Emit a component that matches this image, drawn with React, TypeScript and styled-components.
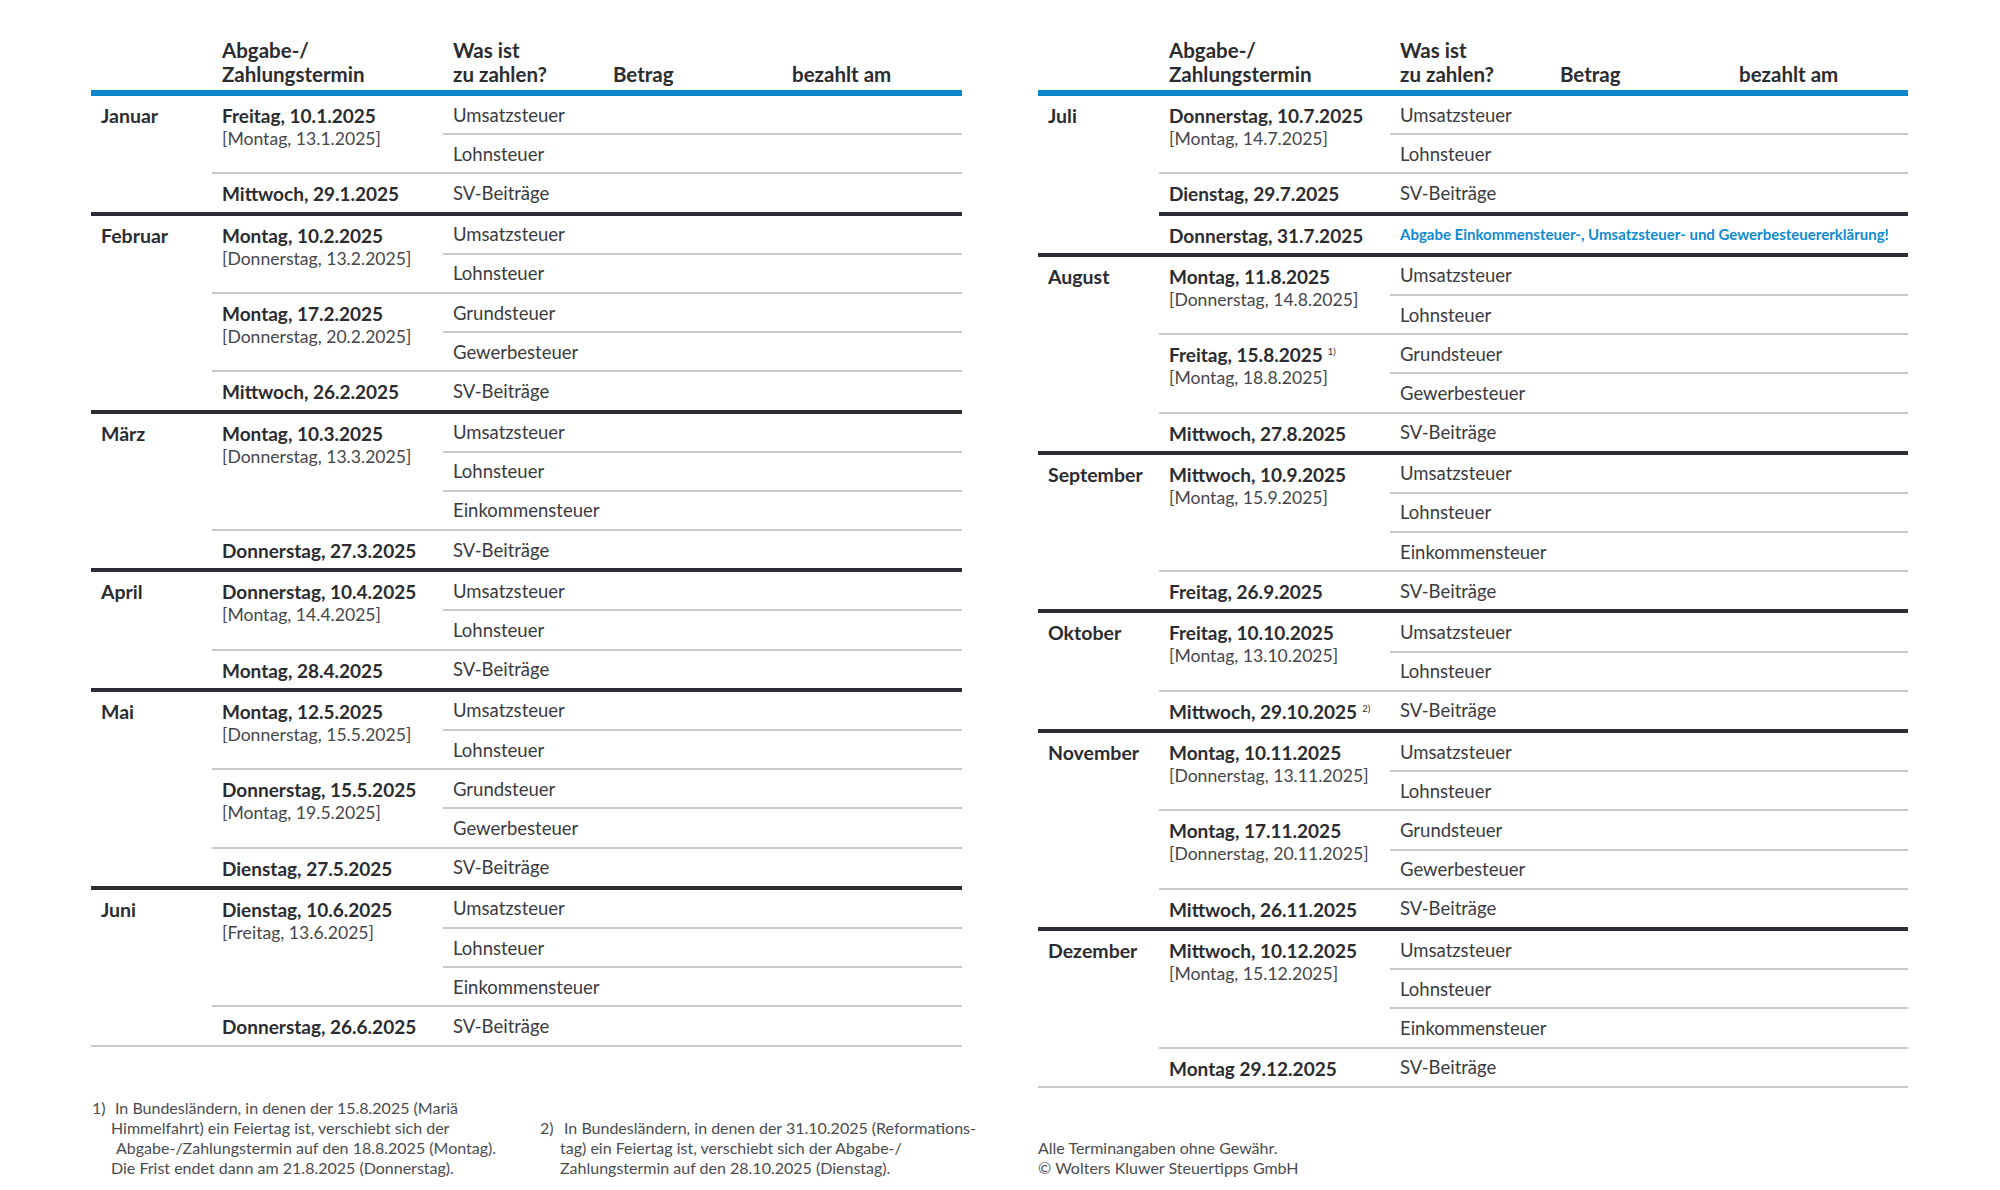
import React from "react";
import styled, { createGlobalStyle } from "styled-components";

const GlobalStyle = createGlobalStyle`
  html, body { margin: 0; padding: 0; background: #ffffff; }
  body { font-family: Lato, "Open Sans", "Liberation Sans", sans-serif; color: #2f3033; }
`;

const BLUE = "#0a86c9";
const DARK = "#2c2e35";
const GRAY = "#c9c9c9";
const COLS = "121px 231px 160px 179px 1fr";

type Group = {
  date: string;
  sup?: string;
  alt?: string;
  items?: string[];
  note?: string;
  thick?: boolean;
};
type Month = { name: string; groups: Group[] };
type Edge = "none" | "thin" | "thick";

const U = "Umsatzsteuer";
const L = "Lohnsteuer";
const E = "Einkommensteuer";
const G = "Grundsteuer";
const GW = "Gewerbesteuer";
const SV = "SV-Beiträge";

const leftMonths: Month[] = [
  {
    name: "Januar",
    groups: [
      { date: "Freitag, 10.1.2025", alt: "[Montag, 13.1.2025]", items: [U, L] },
      { date: "Mittwoch, 29.1.2025", items: [SV] },
    ],
  },
  {
    name: "Februar",
    groups: [
      { date: "Montag, 10.2.2025", alt: "[Donnerstag, 13.2.2025]", items: [U, L] },
      { date: "Montag, 17.2.2025", alt: "[Donnerstag, 20.2.2025]", items: [G, GW] },
      { date: "Mittwoch, 26.2.2025", items: [SV] },
    ],
  },
  {
    name: "März",
    groups: [
      { date: "Montag, 10.3.2025", alt: "[Donnerstag, 13.3.2025]", items: [U, L, E] },
      { date: "Donnerstag, 27.3.2025", items: [SV] },
    ],
  },
  {
    name: "April",
    groups: [
      { date: "Donnerstag, 10.4.2025", alt: "[Montag, 14.4.2025]", items: [U, L] },
      { date: "Montag, 28.4.2025", items: [SV] },
    ],
  },
  {
    name: "Mai",
    groups: [
      { date: "Montag, 12.5.2025", alt: "[Donnerstag, 15.5.2025]", items: [U, L] },
      { date: "Donnerstag, 15.5.2025", alt: "[Montag, 19.5.2025]", items: [G, GW] },
      { date: "Dienstag, 27.5.2025", items: [SV] },
    ],
  },
  {
    name: "Juni",
    groups: [
      { date: "Dienstag, 10.6.2025", alt: "[Freitag, 13.6.2025]", items: [U, L, E] },
      { date: "Donnerstag, 26.6.2025", items: [SV] },
    ],
  },
];

const rightMonths: Month[] = [
  {
    name: "Juli",
    groups: [
      { date: "Donnerstag, 10.7.2025", alt: "[Montag, 14.7.2025]", items: [U, L] },
      { date: "Dienstag, 29.7.2025", items: [SV] },
      {
        date: "Donnerstag, 31.7.2025",
        note: "Abgabe Einkommensteuer-, Umsatzsteuer- und Gewerbesteuererklärung!",
        thick: true,
      },
    ],
  },
  {
    name: "August",
    groups: [
      { date: "Montag, 11.8.2025", alt: "[Donnerstag, 14.8.2025]", items: [U, L] },
      { date: "Freitag, 15.8.2025", sup: "1)", alt: "[Montag, 18.8.2025]", items: [G, GW] },
      { date: "Mittwoch, 27.8.2025", items: [SV] },
    ],
  },
  {
    name: "September",
    groups: [
      { date: "Mittwoch, 10.9.2025", alt: "[Montag, 15.9.2025]", items: [U, L, E] },
      { date: "Freitag, 26.9.2025", items: [SV] },
    ],
  },
  {
    name: "Oktober",
    groups: [
      { date: "Freitag, 10.10.2025", alt: "[Montag, 13.10.2025]", items: [U, L] },
      { date: "Mittwoch, 29.10.2025", sup: "2)", items: [SV] },
    ],
  },
  {
    name: "November",
    groups: [
      { date: "Montag, 10.11.2025", alt: "[Donnerstag, 13.11.2025]", items: [U, L] },
      { date: "Montag, 17.11.2025", alt: "[Donnerstag, 20.11.2025]", items: [G, GW] },
      { date: "Mittwoch, 26.11.2025", items: [SV] },
    ],
  },
  {
    name: "Dezember",
    groups: [
      { date: "Mittwoch, 10.12.2025", alt: "[Montag, 15.12.2025]", items: [U, L, E] },
      { date: "Montag 29.12.2025", items: [SV] },
    ],
  },
];

const edge = (e: Edge) =>
  e === "thick" ? `4px solid ${DARK}` : e === "thin" ? `2px solid ${GRAY}` : "none";

const Page = styled.main`
  display: grid;
  grid-template-columns: 871px 870px;
  grid-template-rows: auto auto;
  column-gap: 76px;
  align-items: start;
  padding: 38px 0 0 91px;
`;

const Table = styled.div`
  display: flex;
  flex-direction: column;
  border-bottom: 2px solid ${GRAY};
`;

const HeadRow = styled.div`
  display: grid;
  grid-template-columns: ${COLS};
  align-items: end;
  padding-bottom: 4px;
  border-bottom: 6px solid ${BLUE};
`;

const HeadCell = styled.div`
  padding-left: 10px;
  font-weight: 700;
  font-size: 20.5px;
  line-height: 24px;
  color: #2b2c30;
  white-space: nowrap;
`;

const MonthBlock = styled.section<{ $top: Edge }>`
  display: grid;
  grid-template-columns: 121px 1fr;
  border-top: ${(p) => edge(p.$top)};
`;

const MonthName = styled.div`
  padding: 8px 0 0 10px;
  font-weight: 700;
  font-size: 19.5px;
  line-height: 23px;
  color: #2b2c30;
`;

const Groups = styled.div`
  display: flex;
  flex-direction: column;
`;

const DateGroup = styled.div<{ $top: Edge }>`
  display: grid;
  grid-template-columns: 231px 1fr;
  border-top: ${(p) => edge(p.$top)};
`;

const DateCell = styled.div`
  padding: 8px 0 0 10px;
`;

const DateMain = styled.div`
  font-weight: 700;
  font-size: 19px;
  line-height: 23px;
  color: #2b2c30;
  white-space: nowrap;
`;

const Sup = styled.span`
  font-weight: 400;
  font-size: 9.5px;
  margin-left: 5px;
  vertical-align: 7px;
  line-height: 0;
`;

const DateAlt = styled.div`
  font-weight: 400;
  font-size: 17.6px;
  line-height: 23px;
  color: #45464a;
  white-space: nowrap;
`;

const Items = styled.div`
  display: flex;
  flex-direction: column;
`;

const ItemRow = styled.div<{ $top: Edge }>`
  display: grid;
  grid-template-columns: 160px 179px 1fr;
  height: 37.2px;
  border-top: ${(p) => edge(p.$top)};
`;

const ItemName = styled.div`
  display: flex;
  align-items: center;
  padding-left: 10px;
  font-size: 18.5px;
  color: #3a3b3f;
  white-space: nowrap;
`;

const Blank = styled.div``;

const NoteRow = styled.div`
  display: flex;
  align-items: center;
  height: 37.2px;
  padding-left: 10px;
  font-weight: 700;
  font-size: 15px;
  color: #0f8bd3;
  white-space: nowrap;
`;

const FootArea = styled.footer`
  display: flex;
  align-items: flex-end;
  align-self: end;
  margin-top: 10px;
`;

const Footnote = styled.div<{ $width?: number; $marker: number }>`
  display: grid;
  flex-shrink: 0;
  grid-template-columns: ${(p) => p.$marker}px auto;
  width: ${(p) => (p.$width ? `${p.$width}px` : "auto")};
  font-size: 16px;
  line-height: 20px;
  color: #4a4b4f;
`;

const Marker = styled.div`
  padding-left: 1px;
`;

const FootLines = styled.div`
  display: flex;
  flex-direction: column;
`;

const FootLine = styled.div<{ $indent?: number }>`
  padding-left: ${(p) => p.$indent ?? 0}px;
  white-space: nowrap;
`;

const Credits = styled.div`
  font-size: 16px;
  line-height: 20px;
  color: #4a4b4f;
`;

const HEADS = ["", "Abgabe-/\nZahlungstermin", "Was ist\nzu zahlen?", "Betrag", "bezahlt am"];

function Head() {
  return (
    <HeadRow>
      {HEADS.map((h, i) => (
        <HeadCell key={i}>
          {h.split("\n").map((line, j) => (
            <div key={j}>{line}</div>
          ))}
        </HeadCell>
      ))}
    </HeadRow>
  );
}

function CalendarTable({ months }: { months: Month[] }) {
  return (
    <Table>
      <Head />
      {months.map((m, mi) => (
        <MonthBlock key={m.name} $top={mi === 0 ? "none" : "thick"}>
          <MonthName>{m.name}</MonthName>
          <Groups>
            {m.groups.map((g, gi) => (
              <DateGroup
                key={g.date}
                $top={gi === 0 ? "none" : g.thick ? "thick" : "thin"}
              >
                <DateCell>
                  <DateMain>
                    {g.date}
                    {g.sup && <Sup>{g.sup}</Sup>}
                  </DateMain>
                  {g.alt && <DateAlt>{g.alt}</DateAlt>}
                </DateCell>
                <Items>
                  {g.note ? (
                    <NoteRow>{g.note}</NoteRow>
                  ) : (
                    g.items!.map((it, ii) => (
                      <ItemRow key={it} $top={ii === 0 ? "none" : "thin"}>
                        <ItemName>{it}</ItemName>
                        <Blank />
                        <Blank />
                      </ItemRow>
                    ))
                  )}
                </Items>
              </DateGroup>
            ))}
          </Groups>
        </MonthBlock>
      ))}
    </Table>
  );
}

export default function App() {
  return (
    <>
      <GlobalStyle />
      <Page>
        <CalendarTable months={leftMonths} />
        <CalendarTable months={rightMonths} />
        <FootArea>
          <Footnote $width={448} $marker={20}>
            <Marker>1)</Marker>
            <FootLines>
              <FootLine $indent={4}>In Bundesländern, in denen der 15.8.2025 (Mariä</FootLine>
              <FootLine>Himmelfahrt) ein Feiertag ist, verschiebt sich der</FootLine>
              <FootLine $indent={5}>Abgabe-/Zahlungstermin auf den 18.8.2025 (Montag).</FootLine>
              <FootLine>Die Frist endet dann am 21.8.2025 (Donnerstag).</FootLine>
            </FootLines>
          </Footnote>
          <Footnote $marker={21}>
            <Marker>2)</Marker>
            <FootLines>
              <FootLine $indent={4}>In Bundesländern, in denen der 31.10.2025 (Reformations-</FootLine>
              <FootLine>tag) ein Feiertag ist, verschiebt sich der Abgabe-/</FootLine>
              <FootLine>Zahlungstermin auf den 28.10.2025 (Dienstag).</FootLine>
            </FootLines>
          </Footnote>
        </FootArea>
        <FootArea>
          <Credits>
            <div>Alle Terminangaben ohne Gewähr.</div>
            <div>© Wolters Kluwer Steuertipps GmbH</div>
          </Credits>
        </FootArea>
      </Page>
    </>
  );
}
